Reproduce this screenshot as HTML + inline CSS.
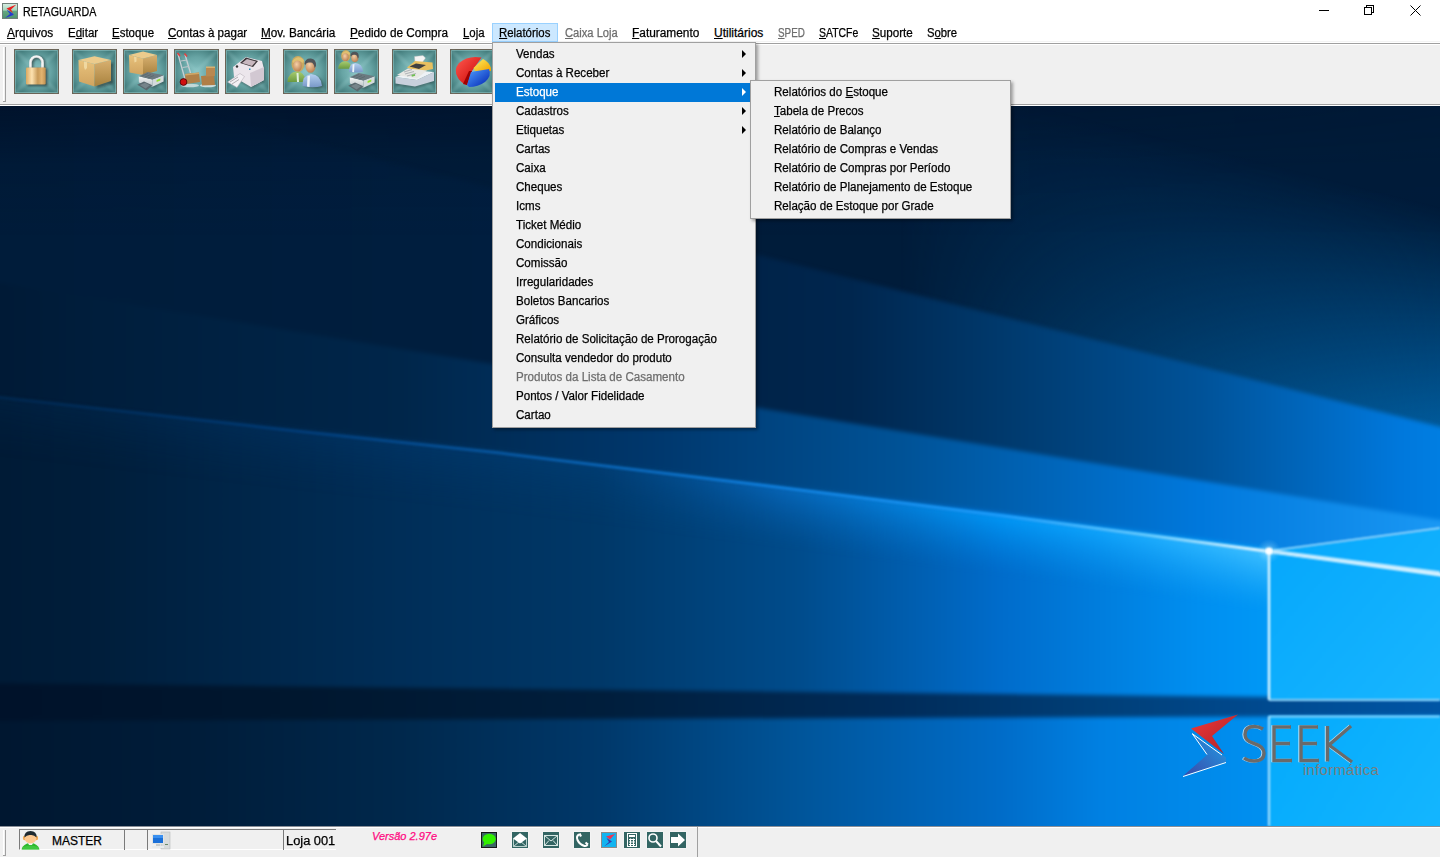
<!DOCTYPE html>
<html><head><meta charset="utf-8">
<style>
*{box-sizing:border-box}
html,body{margin:0;padding:0}
body{width:1440px;height:857px;overflow:hidden;position:relative;background:#f0f0f0;font-family:"Liberation Sans",sans-serif;font-size:12px;color:#000}
.a{position:absolute}
.t{position:absolute;white-space:nowrap;transform-origin:0 0;line-height:14px;-webkit-text-stroke:.25px currentColor}
u{text-decoration:underline;text-decoration-thickness:1px;text-underline-offset:1px}
#desk{left:0;top:106px;width:1440px;height:720px;overflow:hidden;background:#012a5a}
.btn{position:absolute;top:49px;width:45px;height:45px;border:1px solid #5a564c;box-shadow:-1px -1px 0 #fff, 1px 1px 0 #fff;
 background:
  linear-gradient(45deg, rgba(255,255,255,0) 40%, rgba(160,215,215,.35) 50%, rgba(255,255,255,0) 60%),
  linear-gradient(-45deg, rgba(255,255,255,0) 40%, rgba(160,215,215,.35) 50%, rgba(255,255,255,0) 60%),
  radial-gradient(circle at 50% 50%, #7ab4b4 0%, #5e9c9c 45%, #3f7777 100%);}
.btn svg{position:absolute;left:0;top:0}
.mi{position:absolute;left:0;height:19px;width:100%}
.mi .t{left:23px;top:2px;transform:scaleX(.965)}
.arr{position:absolute;width:0;height:0;border-top:4px solid transparent;border-bottom:4px solid transparent;border-left:4px solid #000}
.sico{position:absolute;top:832px;width:16px;height:16px;background:#3b6b67}
</style></head>
<body>
<!-- title bar -->
<div class="a" style="left:0;top:0;width:1440px;height:43px;background:#fff"></div>
<div class="a" style="left:0;top:41px;width:1440px;height:1px;background:#f3f3f3"></div>
<div class="a" style="left:0;top:43px;width:1440px;height:1px;background:#a0a0a0"></div>
<div class="a" style="left:0;top:44px;width:1440px;height:1px;background:#fff"></div>
<div class="a" style="left:0;top:104px;width:1440px;height:1px;background:#a0a0a0"></div>
<div class="a" style="left:0;top:105px;width:1440px;height:1px;background:#fff"></div>

<!-- app icon -->
<svg class="a" style="left:2px;top:3px" width="16" height="16" viewBox="0 0 16 16">
 <defs><linearGradient id="ig" x1="0" y1="0" x2="0" y2="1"><stop offset="0" stop-color="#d8efe4"/><stop offset=".45" stop-color="#a8d4bc"/><stop offset=".5" stop-color="#64a882"/><stop offset="1" stop-color="#4e9270"/></linearGradient></defs>
 <rect x="0.5" y="0.5" width="15" height="15" fill="url(#ig)" stroke="#70807a"/>
 <path d="M4.5 5.5 L14.5 1.5 L9 6.5 L11 10 Z" fill="#e82020"/>
 <path d="M4.5 6.5 L11.5 11 L11.5 12 L3 15 L8 11 Z" fill="#2838d0"/>
</svg>
<div class="t" style="left:23px;top:5px;transform:scaleX(.89)">RETAGUARDA</div>

<!-- window controls -->
<svg class="a" style="left:1300px;top:0" width="140" height="22" shape-rendering="crispEdges">
 <rect x="19" y="10" width="10" height="1" fill="#000"/>
 <path d="M66.5 7.5 V5.5 H73.5 V12.5 H71.5" fill="none" stroke="#000"/>
 <rect x="64.5" y="7.5" width="7" height="7" fill="#fff" stroke="#000"/>
</svg>
<svg class="a" style="left:1409px;top:4px" width="13" height="13">
 <path d="M1.5 1.5 L11.5 11.5 M11.5 1.5 L1.5 11.5" stroke="#000" stroke-width="1"/>
</svg>

<!-- menubar -->
<div class="a" style="left:492px;top:23px;width:66px;height:19px;background:#cce8ff;border:1px solid #99d1ff"></div>
<div id="menubar">
<div class="t" style="left:7px;top:26px;transform:scaleX(.99)"><u>A</u>rquivos</div>
<div class="t" style="left:68px;top:26px;transform:scaleX(.96)">E<u>d</u>itar</div>
<div class="t" style="left:112px;top:26px;transform:scaleX(.955)"><u>E</u>stoque</div>
<div class="t" style="left:168px;top:26px;transform:scaleX(.965)"><u>C</u>ontas à pagar</div>
<div class="t" style="left:261px;top:26px;transform:scaleX(.98)"><u>M</u>ov. Bancária</div>
<div class="t" style="left:350px;top:26px;transform:scaleX(.98)"><u>P</u>edido de Compra</div>
<div class="t" style="left:463px;top:26px;transform:scaleX(.95)"><u>L</u>oja</div>
<div class="t" style="left:499px;top:26px;transform:scaleX(.95)"><u>R</u>elatórios</div>
<div class="t" style="left:565px;top:26px;transform:scaleX(.93);color:#6d6d6d"><u>C</u>aixa Loja</div>
<div class="t" style="left:632px;top:26px;transform:scaleX(.99)"><u>F</u>aturamento</div>
<div class="t" style="left:714px;top:26px;transform:scaleX(1)"><u>U</u>tilitários</div>
<div class="t" style="left:778px;top:26px;transform:scaleX(.82);color:#6d6d6d"><u>S</u>PED</div>
<div class="t" style="left:819px;top:26px;transform:scaleX(.87)"><u>S</u>ATCFe</div>
<div class="t" style="left:872px;top:26px;transform:scaleX(.97)"><u>S</u>uporte</div>
<div class="t" style="left:927px;top:26px;transform:scaleX(.94)">S<u>o</u>bre</div>
</div>

<!-- toolbar grip -->
<div class="a" style="left:3px;top:47px;width:1px;height:55px;background:#fff"></div>
<div class="a" style="left:5px;top:47px;width:1px;height:55px;background:#a0a0a0"></div>
<div class="a" style="left:3px;top:101px;width:3px;height:1px;background:#a0a0a0"></div>

<div id="tb"><!--TB--><svg class="a" style="left:0;top:44px" width="492" height="60" viewBox="0 44 492 60"><defs>
<radialGradient id="bbg" cx="50%" cy="50%" r="60%"><stop offset="0" stop-color="#86c2c2"/><stop offset=".55" stop-color="#67a4a4"/><stop offset="1" stop-color="#3f7878"/></radialGradient>
<linearGradient id="bdg1" x1="0" y1="0" x2="1" y2="1"><stop offset="0" stop-color="#fff" stop-opacity="0"/><stop offset=".5" stop-color="#bfe6e6" stop-opacity=".28"/><stop offset="1" stop-color="#fff" stop-opacity="0"/></linearGradient>
<linearGradient id="gold" x1="0" y1="0" x2="1" y2="0"><stop offset="0" stop-color="#d9a860"/><stop offset=".3" stop-color="#fde2b0"/><stop offset=".6" stop-color="#c89a58"/><stop offset=".8" stop-color="#e2b470"/><stop offset="1" stop-color="#c09050"/></linearGradient>
<linearGradient id="boxL" x1="0" y1="0" x2="0" y2="1"><stop offset="0" stop-color="#e8c27c"/><stop offset="1" stop-color="#d0a460"/></linearGradient>
<linearGradient id="boxR" x1="0" y1="0" x2="0" y2="1"><stop offset="0" stop-color="#d8b070"/><stop offset="1" stop-color="#a8823e"/></linearGradient>
<linearGradient id="prn" x1="0" y1="0" x2="0" y2="1"><stop offset="0" stop-color="#f4f6f6"/><stop offset="1" stop-color="#b8c0c4"/></linearGradient>
<linearGradient id="pie1" x1="0" y1="0" x2="1" y2="1"><stop offset="0" stop-color="#ff5a50"/><stop offset="1" stop-color="#c80000"/></linearGradient>
<linearGradient id="pie2" x1="0" y1="0" x2="1" y2="1"><stop offset="0" stop-color="#50a0ff"/><stop offset="1" stop-color="#0020b0"/></linearGradient>
<linearGradient id="pie3" x1="0" y1="0" x2="1" y2="1"><stop offset="0" stop-color="#fff060"/><stop offset="1" stop-color="#f0a000"/></linearGradient>
<radialGradient id="skin" cx="40%" cy="35%" r="70%"><stop offset="0" stop-color="#f6d0a8"/><stop offset="1" stop-color="#b87c4c"/></radialGradient>
<linearGradient id="grn" x1="0" y1="0" x2="0" y2="1"><stop offset="0" stop-color="#a8cc70"/><stop offset="1" stop-color="#6a9a40"/></linearGradient>
<linearGradient id="blu" x1="0" y1="0" x2="0" y2="1"><stop offset="0" stop-color="#b4d0f0"/><stop offset="1" stop-color="#7898c8"/></linearGradient>
<filter id="sh" x="-30%" y="-30%" width="160%" height="160%"><feGaussianBlur stdDeviation=".8"/></filter>
</defs><g transform="translate(14,49)"><rect x="0.5" y="0.5" width="44" height="44" fill="url(#bbg)" stroke="#6a6356"/><path d="M2 2 L43 43 M43 2 L2 43" stroke="#a6d8d8" stroke-width="4" opacity=".22" filter="url(#sh)"/><rect x="1.5" y="1.5" width="42" height="42" fill="none" stroke="#94c6c6" stroke-opacity=".55"/><path d="M16.5 19 V13.5 a6 6 0 0 1 12 0 V19" fill="none" stroke="#111" stroke-width="3" opacity=".5" filter="url(#sh)" transform="translate(1.5,1)"/>
<path d="M16.5 19 V13.5 a6 6 0 0 1 12 0 V19" fill="none" stroke="#f4f4f4" stroke-width="2.6"/>
<path d="M17.5 19 V13.5 a5 5 0 0 1 10 0" fill="none" stroke="#a8a8a8" stroke-width=".6" opacity=".6"/>
<rect x="13.5" y="19.5" width="20" height="17.5" fill="#111" opacity=".55" filter="url(#sh)"/>
<rect x="12" y="18.5" width="19.7" height="17" rx="1" fill="url(#gold)"/></g><g transform="translate(72,49)"><rect x="0.5" y="0.5" width="44" height="44" fill="url(#bbg)" stroke="#6a6356"/><path d="M2 2 L43 43 M43 2 L2 43" stroke="#a6d8d8" stroke-width="4" opacity=".22" filter="url(#sh)"/><rect x="1.5" y="1.5" width="42" height="42" fill="none" stroke="#94c6c6" stroke-opacity=".55"/><path d="M23 38 L40 33 L40 12 L23 16 Z" fill="#111" opacity=".45" filter="url(#sh)" transform="translate(1.5,1.5)"/>
<path d="M6.5 11 L22.5 15 L22.5 37.5 L7 32.5 Z" fill="url(#boxL)"/>
<path d="M22.5 15 L39 11 L39 32 L22.5 37.5 Z" fill="url(#boxR)"/>
<path d="M6.5 11 L22.5 7.3 L39 11 L22.5 15 Z" fill="#eccb8c"/>
<path d="M12 12.5 L15 13.3 L15 19 L13 21 L12 18 Z" fill="#f0d8a0"/></g><g transform="translate(123,49)"><rect x="0.5" y="0.5" width="44" height="44" fill="url(#bbg)" stroke="#6a6356"/><path d="M2 2 L43 43 M43 2 L2 43" stroke="#a6d8d8" stroke-width="4" opacity=".22" filter="url(#sh)"/><rect x="1.5" y="1.5" width="42" height="42" fill="none" stroke="#94c6c6" stroke-opacity=".55"/><path d="M6 6 L20 9.5 L20 26 L6.5 23.5 Z" fill="url(#boxL)"/>
<path d="M20 9.5 L34 6 L34 22 L20 26 Z" fill="url(#boxR)"/>
<path d="M6 6 L20 2.5 L34 6 L20 9.5 Z" fill="#eccb8c"/>
<path d="M11 7.5 L13.5 8.2 L13.5 12.5 L11.5 13.5 Z" fill="#f0d8a0"/><g transform="translate(14,22)">
<path d="M2 11 L16 16 L27 10 L27 5 L11 1 L2 5 Z" fill="#000" opacity=".3" filter="url(#sh)" transform="translate(1,1.5)"/>
<path d="M1.8 5.3 L15.4 8.5 L15.4 15.8 L1.8 11.6 Z" fill="url(#prn)"/>
<path d="M15.4 8.5 L26.6 4.3 L26.6 10.5 L15.4 15.8 Z" fill="#d4dadc"/>
<path d="M1.8 5.3 L10.7 1.1 L26.6 4.3 L15.4 8.5 Z" fill="#6c7a80"/>
<path d="M5 5 L11 2.5 M8 6 L14 3.5 M11 7 L17 4.5" stroke="#56646a" stroke-width=".7"/>
<path d="M0.2 13.7 L7 10.6 L15.4 14.3 L9.6 19.5 Z" fill="#5a686e"/>
<path d="M3 14 L8 11.8 L13 14.2 L8.5 17.5 Z" fill="#76848a"/>
<path d="M19.6 9 L23.3 7.6 L23.3 9.6 L19.6 11 Z" fill="#90e030"/>
</g></g><g transform="translate(174,49)"><rect x="0.5" y="0.5" width="44" height="44" fill="url(#bbg)" stroke="#6a6356"/><path d="M2 2 L43 43 M43 2 L2 43" stroke="#a6d8d8" stroke-width="4" opacity=".22" filter="url(#sh)"/><rect x="1.5" y="1.5" width="42" height="42" fill="none" stroke="#94c6c6" stroke-opacity=".55"/><path d="M4 5 L11.5 32" stroke="#c8d0d4" stroke-width="1.3"/>
<path d="M11 5.5 L16.5 24" stroke="#c8d0d4" stroke-width="1.3"/>
<path d="M7 12 L13 11 M8.5 18.5 L15 17.5" stroke="#c0c8cc" stroke-width="1"/>
<path d="M3.5 4 L6 7 M10.5 4.5 L13 7.5" stroke="#e04040" stroke-width="1.6"/>
<ellipse cx="16" cy="36.5" rx="9" ry="1.8" fill="#e8f0f0" opacity=".7"/>
<ellipse cx="34" cy="36.5" rx="8" ry="1.8" fill="#e8f0f0" opacity=".8"/>
<path d="M11 25 L25 23.5 L26 33 L12 35 Z" fill="#b08048"/>
<path d="M11 25 L25 23.5 L25 25 L11.5 26.5 Z" fill="#d0a868"/>
<path d="M27 27 L40 26 L41 36 L28 36.5 Z" fill="#b07e46"/>
<path d="M32 18 L41 18 L41 27 L32 27.5 Z" fill="#b88850"/>
<path d="M32 17.5 L41 17.5 L41 19 L32 19 Z" fill="#d8b070"/>
<circle cx="9.5" cy="33" r="3.4" fill="#d01010" stroke="#400" stroke-width=".8"/></g><g transform="translate(225,49)"><rect x="0.5" y="0.5" width="44" height="44" fill="url(#bbg)" stroke="#6a6356"/><path d="M2 2 L43 43 M43 2 L2 43" stroke="#a6d8d8" stroke-width="4" opacity=".22" filter="url(#sh)"/><rect x="1.5" y="1.5" width="42" height="42" fill="none" stroke="#94c6c6" stroke-opacity=".55"/><path d="M8 18 L21 8 L37 12 L39 20 L39 31 L26 38 L10 29 Z" fill="#111" opacity=".35" filter="url(#sh)" transform="translate(1,1.5)"/>
<path d="M8 18 L21 8 L37 12 L39 20 L39 31 L26 38 L9 28 Z" fill="#ece6ec"/>
<path d="M25 24 L39 18 L39 31 L26 38 Z" fill="#d2c8d2"/>
<path d="M15 14 L21 8.5 L33 12 L28 18 Z" fill="#3a3438"/>
<path d="M17 14 L22 10 L31 12.5 L27 17 Z" fill="#c8b8c0"/>
<circle cx="12" cy="17.5" r="1.2" fill="#333"/>
<rect x="24" y="19.5" width="1.5" height="1.5" fill="#2a8ab0"/>
<path d="M2.5 33 L15 24.5 L19.5 27.5 L12 38.5 Z" fill="#f4f0f4" stroke="#b0a8b0" stroke-width=".5"/>
<path d="M5 33 L13 28 M7 35 L14 30.5" stroke="#a09aa0" stroke-width=".8"/></g><g transform="translate(283,49)"><rect x="0.5" y="0.5" width="44" height="44" fill="url(#bbg)" stroke="#6a6356"/><path d="M2 2 L43 43 M43 2 L2 43" stroke="#a6d8d8" stroke-width="4" opacity=".22" filter="url(#sh)"/><rect x="1.5" y="1.5" width="42" height="42" fill="none" stroke="#94c6c6" stroke-opacity=".55"/><ellipse cx="15" cy="15" rx="6.5" ry="8" fill="#c8a860"/>
<path d="M9.5 12 Q15 5 21 11 L20 14 Q15 10 10 14 Z" fill="#e0c070"/>
<ellipse cx="14.5" cy="17" rx="4.3" ry="5.5" fill="url(#skin)"/>
<path d="M4.5 33 Q5 23 14 22.5 Q22 23 23 33 Z" fill="url(#grn)"/>
<path d="M13.5 24 L15.5 24 L16 33 L14 33 Z" fill="#e0f0e0"/>
<path d="M20 36.5 Q20 26 28.5 25.5 Q38.5 26 39.5 37.5 Q30 40 20 36.5 Z" fill="#000" opacity=".35" filter="url(#sh)" transform="translate(1,1)"/>
<ellipse cx="27.5" cy="17.5" rx="5" ry="6.3" fill="url(#skin)"/>
<path d="M21.5 15 Q22 9 28 9.5 Q33.5 10 33 17 L31.5 19 Q31 13 27 13.5 Q23 13 22.5 16 Z" fill="#505458"/>
<path d="M19.5 37 Q19 26 28 25 Q38 25.5 39 37 Q30 39.5 19.5 37 Z" fill="url(#blu)"/>
<path d="M24.5 27 L27 26.5 L26.5 38 L24 37.5 Z" fill="#f0f4f8"/></g><g transform="translate(334,49)"><rect x="0.5" y="0.5" width="44" height="44" fill="url(#bbg)" stroke="#6a6356"/><path d="M2 2 L43 43 M43 2 L2 43" stroke="#a6d8d8" stroke-width="4" opacity=".22" filter="url(#sh)"/><rect x="1.5" y="1.5" width="42" height="42" fill="none" stroke="#94c6c6" stroke-opacity=".55"/><g transform="translate(1,-4) scale(.72)">
<ellipse cx="15" cy="15" rx="6.5" ry="8" fill="#c8a860"/>
<path d="M9.5 12 Q15 5 21 11 L20 14 Q15 10 10 14 Z" fill="#e0c070"/>
<ellipse cx="14.5" cy="17" rx="4.3" ry="5.5" fill="url(#skin)"/>
<path d="M4.5 33 Q5 23 14 22.5 Q22 23 23 33 Z" fill="url(#grn)"/>
<ellipse cx="27.5" cy="17.5" rx="5" ry="6.3" fill="url(#skin)"/>
<path d="M21.5 15 Q22 9 28 9.5 Q33.5 10 33 17 L31.5 19 Q31 13 27 13.5 Q23 13 22.5 16 Z" fill="#505458"/>
<path d="M19.5 37 Q19 26 28 25 Q38 25.5 39 37 Q30 39.5 19.5 37 Z" fill="url(#blu)"/>
<path d="M24.5 27 L27 26.5 L26.5 38 L24 37.5 Z" fill="#f0f4f8"/>
</g><g transform="translate(14,23)">
<path d="M2 11 L16 16 L27 10 L27 5 L11 1 L2 5 Z" fill="#000" opacity=".3" filter="url(#sh)" transform="translate(1,1.5)"/>
<path d="M1.8 5.3 L15.4 8.5 L15.4 15.8 L1.8 11.6 Z" fill="url(#prn)"/>
<path d="M15.4 8.5 L26.6 4.3 L26.6 10.5 L15.4 15.8 Z" fill="#d4dadc"/>
<path d="M1.8 5.3 L10.7 1.1 L26.6 4.3 L15.4 8.5 Z" fill="#6c7a80"/>
<path d="M5 5 L11 2.5 M8 6 L14 3.5 M11 7 L17 4.5" stroke="#56646a" stroke-width=".7"/>
<path d="M0.2 13.7 L7 10.6 L15.4 14.3 L9.6 19.5 Z" fill="#5a686e"/>
<path d="M3 14 L8 11.8 L13 14.2 L8.5 17.5 Z" fill="#76848a"/>
<path d="M19.6 9 L23.3 7.6 L23.3 9.6 L19.6 11 Z" fill="#90e030"/>
</g></g><g transform="translate(392,49)"><rect x="0.5" y="0.5" width="44" height="44" fill="url(#bbg)" stroke="#6a6356"/><path d="M2 2 L43 43 M43 2 L2 43" stroke="#a6d8d8" stroke-width="4" opacity=".22" filter="url(#sh)"/><rect x="1.5" y="1.5" width="42" height="42" fill="none" stroke="#94c6c6" stroke-opacity=".55"/><path d="M3 29 L27 25 L42 22 L42 32 L23 38 L3 35 Z" fill="#000" opacity=".3" filter="url(#sh)" transform="translate(.5,1.5)"/>
<path d="M22.5 7.5 L31 6.5 L33.5 9 L30 14 L23 14 Z" fill="#f4f4f4" stroke="#b8b8b8" stroke-width=".4"/>
<path d="M15 18.5 L23 12 L40.5 13.5 L41 20 L26 23 Z" fill="#e8c060"/>
<path d="M17.5 17.5 L24 14.5 L34 16 L27 20 Z" fill="#404040"/>
<path d="M3.5 28 L25 31 L42 23 L42 32 L23 37.5 L3.5 34.5 Z" fill="#c8d0dc"/>
<path d="M3.5 28 L25 31 L42 23 L22 21.5 Z" fill="#eef2f6"/>
<path d="M5 26 L16 19.5 L35 21.5 L25 29.5 Z" fill="#e8e8e4"/>
<path d="M12 23 L20 20.5 M13 25 L22 22.5 M15 27 L24 24.5" stroke="#b0b4b8" stroke-width="1.1"/>
<rect x="19.5" y="25.5" width="3.5" height="1.8" fill="#70c050" transform="rotate(-15 21 26)"/></g><g transform="translate(450,49)"><rect x="0.5" y="0.5" width="44" height="44" fill="url(#bbg)" stroke="#6a6356"/><path d="M2 2 L43 43 M43 2 L2 43" stroke="#a6d8d8" stroke-width="4" opacity=".22" filter="url(#sh)"/><rect x="1.5" y="1.5" width="42" height="42" fill="none" stroke="#94c6c6" stroke-opacity=".55"/><path d="M22 22 L31.5 8.5 Q18 6 9 14 Q3 21 8 29 Q11 34 17 36 Z" fill="url(#pie1)"/>
<path d="M22 22 L17 36 L13 35 L19 22 Z" fill="#a00000"/>
<path d="M23.5 19 L33 10 Q39 13 41 19 L41 22 L25 22 Z" fill="url(#pie3)"/>
<path d="M21 23 L39 20 Q42 27 35 33 Q28 38 19 38 L17 36 Z" fill="url(#pie2)"/></g></svg><!--/TB--></div>

<!-- desktop -->
<div id="desk" class="a"><!--BG--><svg class="a" style="left:0;top:0" width="1440" height="720" viewBox="0 106 1440 720"><defs><filter id="bl2" x="-5%" y="-5%" width="110%" height="110%" color-interpolation-filters="sRGB"><feGaussianBlur stdDeviation="2"/></filter><filter id="bl20" x="-20%" y="-50%" width="140%" height="200%" color-interpolation-filters="sRGB"><feGaussianBlur stdDeviation="20"/></filter><filter id="bl1" x="-5%" y="-50%" width="110%" height="200%" color-interpolation-filters="sRGB"><feGaussianBlur stdDeviation="1"/></filter><linearGradient id="gAg" gradientUnits="userSpaceOnUse" x1="0" y1="-156" x2="0" y2="64" gradientTransform="skewY(14.144)"><stop offset="0.0000" stop-color="#005a9a" stop-opacity="0"/><stop offset="1.0000" stop-color="#005a9a" stop-opacity="1"/></linearGradient><radialGradient id="corner"><stop offset="0" stop-color="#fff" stop-opacity=".8"/><stop offset=".3" stop-color="#c0ecff" stop-opacity=".35"/><stop offset="1" stop-color="#80d0ff" stop-opacity="0"/></radialGradient><linearGradient id="gTop" x1="0" y1="0" x2="0" y2="1"><stop offset="0" stop-color="#000a1e" stop-opacity=".5"/><stop offset=".45" stop-color="#000a1e" stop-opacity=".1"/><stop offset="1" stop-color="#000a1e" stop-opacity="0"/></linearGradient><linearGradient id="mTopx" gradientUnits="userSpaceOnUse" x1="0" y1="0" x2="1440" y2="0"><stop offset="0.0000" stop-color="#fff" stop-opacity="1"/><stop offset="0.4861" stop-color="#fff" stop-opacity="0.7"/><stop offset="1.0000" stop-color="#fff" stop-opacity="0.25"/></linearGradient><mask id="mTop" maskUnits="userSpaceOnUse" x="0" y="106" width="1440" height="130"><rect x="0" y="106" width="1440" height="130" fill="url(#mTopx)"/></mask><linearGradient id="gAx" gradientUnits="userSpaceOnUse" x1="0" y1="0" x2="1440" y2="0"><stop offset="0.6250" stop-color="#005a9a" stop-opacity="0"/><stop offset="1.0000" stop-color="#005a9a" stop-opacity="1"/></linearGradient><linearGradient id="mAx" gradientUnits="userSpaceOnUse" x1="0" y1="0" x2="1440" y2="0"><stop offset="0.6250" stop-color="#fff" stop-opacity="0"/><stop offset="1.0000" stop-color="#fff" stop-opacity="1"/></linearGradient><mask id="mA" maskUnits="userSpaceOnUse" x="0" y="106" width="1440" height="720"><rect x="0" y="106" width="1440" height="720" fill="url(#mAx)"/></mask><linearGradient id="gAB" gradientUnits="userSpaceOnUse" x1="0" y1="0" x2="1440" y2="0"><stop offset="0.0000" stop-color="#001c3a" stop-opacity="1"/><stop offset="0.4167" stop-color="#001f40" stop-opacity="1"/><stop offset="0.5903" stop-color="#00264e" stop-opacity="1"/><stop offset="0.6944" stop-color="#00396c" stop-opacity="1"/><stop offset="0.8333" stop-color="#005298" stop-opacity="1"/><stop offset="0.9722" stop-color="#0078dc" stop-opacity="1"/><stop offset="1.0000" stop-color="#007ee2" stop-opacity="1"/></linearGradient><linearGradient id="gBC" gradientUnits="userSpaceOnUse" x1="0" y1="0" x2="1440" y2="0"><stop offset="0.0000" stop-color="#001a36" stop-opacity="1"/><stop offset="0.0694" stop-color="#001e3c" stop-opacity="1"/><stop offset="0.2778" stop-color="#00264a" stop-opacity="1"/><stop offset="0.4514" stop-color="#00376c" stop-opacity="1"/><stop offset="0.6250" stop-color="#005296" stop-opacity="1"/><stop offset="0.8333" stop-color="#0078dc" stop-opacity="1"/><stop offset="1.0000" stop-color="#1a98f4" stop-opacity="1"/></linearGradient><linearGradient id="gC" gradientUnits="userSpaceOnUse" x1="0" y1="0" x2="1440" y2="0"><stop offset="0.0000" stop-color="#001b36" stop-opacity="1"/><stop offset="0.0694" stop-color="#001e3b" stop-opacity="1"/><stop offset="0.2778" stop-color="#002e58" stop-opacity="1"/><stop offset="0.4167" stop-color="#003868" stop-opacity="1"/><stop offset="0.5556" stop-color="#004c8c" stop-opacity="1"/><stop offset="0.6944" stop-color="#006ccb" stop-opacity="1"/><stop offset="0.8333" stop-color="#008ff0" stop-opacity="1"/><stop offset="0.8806" stop-color="#0098f6" stop-opacity="1"/><stop offset="1.0000" stop-color="#0aa0fa" stop-opacity="1"/></linearGradient><linearGradient id="gD" gradientUnits="userSpaceOnUse" x1="0" y1="0" x2="1440" y2="0"><stop offset="0.0000" stop-color="#00122a" stop-opacity="1"/><stop offset="0.2083" stop-color="#00172f" stop-opacity="1"/><stop offset="0.4167" stop-color="#001e3c" stop-opacity="1"/><stop offset="0.6250" stop-color="#002c5a" stop-opacity="1"/><stop offset="0.7639" stop-color="#003f78" stop-opacity="1"/><stop offset="0.8806" stop-color="#004a90" stop-opacity="1"/><stop offset="1.0000" stop-color="#0056a6" stop-opacity="1"/></linearGradient><linearGradient id="gE" gradientUnits="userSpaceOnUse" x1="0" y1="0" x2="1440" y2="0"><stop offset="0.0000" stop-color="#001730" stop-opacity="1"/><stop offset="0.1389" stop-color="#001d3a" stop-opacity="1"/><stop offset="0.2778" stop-color="#00284c" stop-opacity="1"/><stop offset="0.4167" stop-color="#00386a" stop-opacity="1"/><stop offset="0.5556" stop-color="#00559a" stop-opacity="1"/><stop offset="0.6944" stop-color="#006cc8" stop-opacity="1"/><stop offset="0.7639" stop-color="#0080e2" stop-opacity="1"/><stop offset="0.8806" stop-color="#0090f0" stop-opacity="1"/><stop offset="1.0000" stop-color="#0098f4" stop-opacity="1"/></linearGradient><linearGradient id="gP" gradientUnits="userSpaceOnUse" x1="1269" y1="551" x2="1440" y2="700"><stop offset="0.0000" stop-color="#06a8fc" stop-opacity="1"/><stop offset="1.0000" stop-color="#18b6ff" stop-opacity="1"/></linearGradient><linearGradient id="gP2" gradientUnits="userSpaceOnUse" x1="1269" y1="716" x2="1440" y2="826"><stop offset="0.0000" stop-color="#04aafc" stop-opacity="1"/><stop offset="1.0000" stop-color="#14b6ff" stop-opacity="1"/></linearGradient><linearGradient id="lineC" gradientUnits="userSpaceOnUse" x1="0" y1="0" x2="1440" y2="0"><stop offset="0.0000" stop-color="#013060" stop-opacity="0.5"/><stop offset="0.2083" stop-color="#014080" stop-opacity="0.8"/><stop offset="0.5278" stop-color="#1080e0" stop-opacity="0.9"/><stop offset="0.6944" stop-color="#20a0ff" stop-opacity="0.9"/><stop offset="0.7986" stop-color="#70d0ff" stop-opacity="0.95"/><stop offset="0.8812" stop-color="#f0fbff" stop-opacity="1"/></linearGradient><linearGradient id="glowC" gradientUnits="userSpaceOnUse" x1="0" y1="0" x2="1440" y2="0"><stop offset="0.0000" stop-color="#01305e" stop-opacity="0.2"/><stop offset="0.2083" stop-color="#013a72" stop-opacity="0.3"/><stop offset="0.4167" stop-color="#034a8e" stop-opacity="0.25"/><stop offset="0.5417" stop-color="#0a78d8" stop-opacity="0.55"/><stop offset="0.6944" stop-color="#00a0ff" stop-opacity="0.8"/><stop offset="0.7639" stop-color="#10a8ff" stop-opacity="0.9"/><stop offset="0.8812" stop-color="#40c0ff" stop-opacity="1"/></linearGradient><linearGradient id="gmC" gradientUnits="userSpaceOnUse" x1="0" y1="397" x2="0" y2="437" gradientTransform="skewY(7.069)"><stop offset="0.0000" stop-color="#fff" stop-opacity="1"/><stop offset="0.2500" stop-color="#fff" stop-opacity="0.6"/><stop offset="1.0000" stop-color="#fff" stop-opacity="0"/></linearGradient><mask id="mC" maskUnits="userSpaceOnUse" x="0" y="106" width="1440" height="720"><rect x="0" y="106" width="1440" height="720" fill="url(#gmC)"/></mask></defs>
<rect x="0" y="106" width="1440" height="720" fill="#001c3a"/>
<polygon points="0,72.0 1440,434.9 1440,196.9 0,-166.0" fill="url(#gAg)" mask="url(#mA)"/>
<g filter="url(#bl2)">
<polygon points="-20,59.0 1460,431.9 1460,526.3 -20,282.7" fill="url(#gAB)"/>
<polygon points="-20,279.7 1460,523.3 1460,577.0 1269,551.0 1000,515.0 760,484.6 500,452.6 300,431.0 0,397.0 -20,394.5" fill="url(#gBC)"/>
<polygon points="-20,391.5 0,394.0 300,428.0 500,449.6 760,481.6 1000,512.0 1269,548.0 1460,574.0 1460,700 -20,684" fill="url(#gC)"/>
<polygon points="-20,712 1460,712 1460,840 -20,840" fill="url(#gE)"/>
<polygon points="-20,683 1460,699 1460,716 -20,721" fill="url(#gD)"/>
</g>
<rect x="0" y="106" width="1440" height="130" fill="url(#gTop)" mask="url(#mTop)"/>
<g filter="url(#bl2)"><polygon points="-20,394.5 0,397.0 300,431.0 500,452.6 760,484.6 1000,515.0 1269,551.0 1460,577.0 1460,581.0 1269,555.0 1000,519.0 760,488.6 500,456.6 300,435.0 0,401.0 -20,398.5" fill="url(#glowC)" opacity="1.000"/><polygon points="-20,398.5 0,401.0 300,435.0 500,456.6 760,488.6 1000,519.0 1269,555.0 1460,581.0 1460,585.0 1269,559.0 1000,523.0 760,492.6 500,460.6 300,439.0 0,405.0 -20,402.5" fill="url(#glowC)" opacity="0.902"/><polygon points="-20,402.5 0,405.0 300,439.0 500,460.6 760,492.6 1000,523.0 1269,559.0 1460,585.0 1460,589.0 1269,563.0 1000,527.0 760,496.6 500,464.6 300,443.0 0,409.0 -20,406.5" fill="url(#glowC)" opacity="0.807"/><polygon points="-20,406.5 0,409.0 300,443.0 500,464.6 760,496.6 1000,527.0 1269,563.0 1460,589.0 1460,593.0 1269,567.0 1000,531.0 760,500.6 500,468.6 300,447.0 0,413.0 -20,410.5" fill="url(#glowC)" opacity="0.716"/><polygon points="-20,410.5 0,413.0 300,447.0 500,468.6 760,500.6 1000,531.0 1269,567.0 1460,593.0 1460,597.0 1269,571.0 1000,535.0 760,504.6 500,472.6 300,451.0 0,417.0 -20,414.5" fill="url(#glowC)" opacity="0.628"/><polygon points="-20,414.5 0,417.0 300,451.0 500,472.6 760,504.6 1000,535.0 1269,571.0 1460,597.0 1460,601.0 1269,575.0 1000,539.0 760,508.6 500,476.6 300,455.0 0,421.0 -20,418.5" fill="url(#glowC)" opacity="0.544"/><polygon points="-20,418.5 0,421.0 300,455.0 500,476.6 760,508.6 1000,539.0 1269,575.0 1460,601.0 1460,605.0 1269,579.0 1000,543.0 760,512.6 500,480.6 300,459.0 0,425.0 -20,422.5" fill="url(#glowC)" opacity="0.465"/><polygon points="-20,422.5 0,425.0 300,459.0 500,480.6 760,512.6 1000,543.0 1269,579.0 1460,605.0 1460,609.0 1269,583.0 1000,547.0 760,516.6 500,484.6 300,463.0 0,429.0 -20,426.5" fill="url(#glowC)" opacity="0.389"/><polygon points="-20,426.5 0,429.0 300,463.0 500,484.6 760,516.6 1000,547.0 1269,583.0 1460,609.0 1460,613.0 1269,587.0 1000,551.0 760,520.6 500,488.6 300,467.0 0,433.0 -20,430.5" fill="url(#glowC)" opacity="0.319"/><polygon points="-20,430.5 0,433.0 300,467.0 500,488.6 760,520.6 1000,551.0 1269,587.0 1460,613.0 1460,617.0 1269,591.0 1000,555.0 760,524.6 500,492.6 300,471.0 0,437.0 -20,434.5" fill="url(#glowC)" opacity="0.253"/><polygon points="-20,434.5 0,437.0 300,471.0 500,492.6 760,524.6 1000,555.0 1269,591.0 1460,617.0 1460,621.0 1269,595.0 1000,559.0 760,528.6 500,496.6 300,475.0 0,441.0 -20,438.5" fill="url(#glowC)" opacity="0.192"/><polygon points="-20,438.5 0,441.0 300,475.0 500,496.6 760,528.6 1000,559.0 1269,595.0 1460,621.0 1460,625.0 1269,599.0 1000,563.0 760,532.6 500,500.6 300,479.0 0,445.0 -20,442.5" fill="url(#glowC)" opacity="0.138"/><polygon points="-20,442.5 0,445.0 300,479.0 500,500.6 760,532.6 1000,563.0 1269,599.0 1460,625.0 1460,629.0 1269,603.0 1000,567.0 760,536.6 500,504.6 300,483.0 0,449.0 -20,446.5" fill="url(#glowC)" opacity="0.089"/><polygon points="-20,446.5 0,449.0 300,483.0 500,504.6 760,536.6 1000,567.0 1269,603.0 1460,629.0 1460,633.0 1269,607.0 1000,571.0 760,540.6 500,508.6 300,487.0 0,453.0 -20,450.5" fill="url(#glowC)" opacity="0.049"/><polygon points="-20,450.5 0,453.0 300,487.0 500,508.6 760,540.6 1000,571.0 1269,607.0 1460,633.0 1460,637.0 1269,611.0 1000,575.0 760,544.6 500,512.6 300,491.0 0,457.0 -20,454.5" fill="url(#glowC)" opacity="0.017"/></g>
<g filter="url(#bl1)">
<polygon points="1269,551 1460,526 1460,700 1269,700" fill="url(#gP)"/>
<polygon points="1269,716 1460,716 1460,840 1269,840" fill="url(#gP2)"/>
</g>
<g filter="url(#bl1)">
<polyline points="-20,395.0 0,397.5 300,431.5 500,453.1 760,485.1 1000,515.5 1269,551.5 1460,577.5" fill="none" stroke="url(#lineC)" stroke-width="3"/>
<line x1="1269" y1="551" x2="1440" y2="528" stroke="#b0e4ff" stroke-width="1.6"/>
<line x1="1269" y1="551" x2="1440" y2="573" stroke="#c8ecff" stroke-width="3.5"/>
<line x1="1269" y1="551" x2="1269" y2="700" stroke="#f4fcff" stroke-width="2.2"/>
<line x1="1269" y1="716" x2="1269" y2="826" stroke="#e0f6ff" stroke-width="1.6"/>
<line x1="1269" y1="700" x2="1440" y2="700" stroke="#c0eaff" stroke-width="1.3"/>
<line x1="1269" y1="716.5" x2="1440" y2="716.5" stroke="#b0e4ff" stroke-width="1.3"/>
</g>
<circle cx="1269" cy="551" r="12" fill="url(#corner)"/><circle cx="1269" cy="551" r="3.5" fill="#fff" filter="url(#bl1)"/>
</svg><!--/BG--></div>
<div class="a" style="left:0;top:826px;width:1440px;height:1px;background:#8a8f98"></div>
<div class="a" style="left:0;top:827px;width:1440px;height:1px;background:#fff"></div>

<!-- status bar -->
<div class="a" style="left:3px;top:830px;width:1px;height:26px;background:#fff"></div>
<div class="a" style="left:5px;top:830px;width:1px;height:26px;background:#a0a0a0"></div>
<div class="a" style="left:3px;top:855px;width:3px;height:1px;background:#a0a0a0"></div>

<div class="a" style="left:19px;top:829px;width:317px;height:21px;border-top:1px solid #7a7a7a;border-left:1px solid #7a7a7a;border-bottom:1px solid #fff"></div>
<div class="a" style="left:124px;top:829px;width:1px;height:21px;background:#7a7a7a"></div>
<div class="a" style="left:147px;top:829px;width:1px;height:21px;background:#7a7a7a"></div>
<div class="a" style="left:283px;top:829px;width:1px;height:21px;background:#7a7a7a"></div>
<div class="t" style="left:52px;top:834px">MASTER</div>
<div class="t" style="left:286px;top:834px;transform:scaleX(1.07)">Loja 001</div>
<div class="t" style="left:372px;top:829px;font-size:11px;font-style:italic;color:#ff0a82">Versão 2.97e</div>
<div class="a" style="left:697px;top:827px;width:1px;height:30px;background:#a0a0a0"></div>

<!--ST--><svg class="a" style="left:470px;top:826px" width="230" height="31" viewBox="470 826 230 31"><g transform="translate(481,832)"><rect x="-0.5" y="-0.5" width="17" height="17" fill="#fff" opacity=".5"/><rect x="0" y="0" width="16" height="16" fill="#3b6764"/><ellipse cx="8.2" cy="7" rx="6.6" ry="5.2" fill="#33f000"/><path d="M3.5 9.5 L2 14.5 L7 11.5 Z" fill="#33f000"/><rect x="0.5" y="0.5" width="15" height="15" fill="none" stroke="#161616"/></g><g transform="translate(512,832)"><rect x="-0.5" y="-0.5" width="17" height="17" fill="#fff" opacity=".5"/><rect x="0" y="0" width="16" height="16" fill="#336563"/><path d="M1.5 6.5 V14.5 H14.5 V6.5" fill="none" stroke="#b8d0cc" stroke-width="1"/><path d="M1.5 14.5 L8 9 L14.5 14.5" fill="none" stroke="#c8dcd8" stroke-width="1"/><path d="M1 6.5 L8 1 L15 6.5 L8 11.5 Z" fill="#fff"/></g><g transform="translate(543,832)"><rect x="-0.5" y="-0.5" width="17" height="17" fill="#fff" opacity=".5"/><rect x="0" y="0" width="16" height="16" fill="#336563"/><rect x="1.5" y="3.5" width="13" height="10" fill="none" stroke="#d8e8e4"/><path d="M1.5 3.5 L8 9 L14.5 3.5 M1.5 13.5 L6 8.5 M14.5 13.5 L10 8.5" fill="none" stroke="#d8e8e4"/></g><g transform="translate(574,832)"><rect x="-0.5" y="-0.5" width="17" height="17" fill="#fff" opacity=".5"/><rect x="0" y="0" width="16" height="16" fill="#336563"/><path d="M5 2.5 Q2 4 3.5 8 Q5.5 12.5 10.5 14 Q12.5 14.5 13.5 12.5" fill="none" stroke="#fff" stroke-width="2"/><path d="M5.5 1.5 L7 4.5 M11.5 10.5 L14 12.5" stroke="#fff" stroke-width="2.2"/></g><g transform="translate(601,832)"><rect x="-0.5" y="-0.5" width="17" height="17" fill="#fff" opacity=".5"/><rect x="0" y="0" width="16" height="16" fill="#12b4f0"/><path d="M14 2 L5 4.5 L9 7.5 Z" fill="#f03050"/><path d="M5.5 6 L11 9.5 L3 14.5 L8 10 Z" fill="#3838a8"/><rect x="0.5" y="0.5" width="15" height="15" fill="none" stroke="#8a8a8a"/></g><g transform="translate(624,832)"><rect x="-0.5" y="-0.5" width="17" height="17" fill="#fff" opacity=".5"/><rect x="0" y="0" width="16" height="16" fill="#336563"/><rect x="3.5" y="1.5" width="9" height="13" fill="none" stroke="#fff"/><rect x="5" y="3" width="6" height="2" fill="#fff"/><path d="M5 7.5 H11 M5 10 H11 M5 12.5 H11 M6.5 6.5 V14 M9.5 6.5 V14" stroke="#fff" stroke-width="1"/></g><g transform="translate(647,832)"><rect x="-0.5" y="-0.5" width="17" height="17" fill="#fff" opacity=".5"/><rect x="0" y="0" width="16" height="16" fill="#336563"/><circle cx="6" cy="6" r="4" fill="none" stroke="#fff" stroke-width="1.6"/><path d="M9 9 L14 14.5" stroke="#fff" stroke-width="2"/></g><g transform="translate(670,832)"><rect x="-0.5" y="-0.5" width="17" height="17" fill="#fff" opacity=".5"/><rect x="0" y="0" width="16" height="16" fill="#336563"/><path d="M1 5 H8 V1.5 L15 8 L8 14.5 V11 H1 Z" fill="#fff"/></g></svg><svg class="a" style="left:20px;top:830px" width="22" height="20" viewBox="0 0 22 20">
<path d="M1.5 19.5 Q3 13.5 10.5 13 Q18 13.5 19.5 19.5 Z" fill="#2db82d"/><path d="M3 17 Q10.5 14 18 17 L19 19.5 L2 19.5 Z" fill="#4ad04a" opacity=".6"/>
<path d="M8 13 L13 13 L12 15 L9 15 Z" fill="#f4f4f4"/>
<ellipse cx="4.5" cy="8" rx="1.6" ry="2.2" fill="#f0a850"/><ellipse cx="16.5" cy="8" rx="1.6" ry="2.2" fill="#f0a850"/>
<ellipse cx="10.5" cy="8.5" rx="5.8" ry="5" fill="#fcc890"/>
<path d="M4.5 7.5 Q4 1 10.5 1 Q17 1 16.5 7.5 Q14 4.5 10.5 5 Q7 4.5 4.5 7.5 Z" fill="#1e2a30"/>
</svg><svg class="a" style="left:150px;top:831px" width="22" height="19" viewBox="0 0 22 19">
<rect x="11" y="1" width="9" height="17" fill="#d8dcdc" stroke="#b8bcbc" stroke-width=".6"/>
<rect x="2" y="3" width="12" height="10" fill="#e0e4e4"/><rect x="3" y="4" width="10" height="8" fill="#1a70d8"/><rect x="3" y="4" width="10" height="3" fill="#3a90f0"/>
<rect x="6" y="13" width="4" height="2" fill="#c8cccc"/><rect x="2" y="15" width="12" height="2" fill="#e8ecec"/>
<rect x="15" y="13" width="3" height="1" fill="#6a8a6a"/>
</svg><svg class="a" style="left:1170px;top:705px" width="230" height="80" viewBox="1170 705 230 80">
<defs><linearGradient id="skr" x1="0" y1="0" x2="1" y2="1"><stop offset="0" stop-color="#f03838"/><stop offset="1" stop-color="#a82028"/></linearGradient>
<linearGradient id="skb" x1="1" y1="0" x2="0" y2="1"><stop offset="0" stop-color="#20a0e8"/><stop offset="1" stop-color="#3a48a8"/></linearGradient></defs>
<path d="M1191 728.5 L1238 714.5 L1212 736 L1224 754 Z" fill="url(#skr)"/>
<path d="M1192.5 733.5 L1226 757.5 L1226 762 L1183 776 L1207.5 754.5 Z" fill="url(#skb)"/>
<path d="M1192 733.5 L1222 755 M1192.5 734 L1207 754.5 M1183 776.5 L1226 762.5" stroke="#fff" stroke-width="1" fill="none"/>
<g fill="none" stroke="#f4f8fc" stroke-width="3.4" transform="translate(-1,0)" opacity=".7">
<path d="M1263 729 Q1259 726.5 1254 726.5 Q1245 726.5 1245 734.5 Q1245 741 1254 743.5 Q1264 746.5 1264 753 Q1264 761 1254 761 Q1248 761 1244 758"/>
<path d="M1291 727 H1274 V760.5 H1292 M1274 743.5 H1290"/>
<path d="M1318 727 H1301 V760.5 H1319 M1301 743.5 H1317"/>
<path d="M1327.5 726 V761.5 M1351 726 L1329 745 L1352 762"/>
</g>
<g fill="none" stroke="#6a6a6a" stroke-width="3.4">
<path d="M1263 729 Q1259 726.5 1254 726.5 Q1245 726.5 1245 734.5 Q1245 741 1254 743.5 Q1264 746.5 1264 753 Q1264 761 1254 761 Q1248 761 1244 758"/>
<path d="M1291 727 H1274 V760.5 H1292 M1274 743.5 H1290"/>
<path d="M1318 727 H1301 V760.5 H1319 M1301 743.5 H1317"/>
<path d="M1327.5 726 V761.5 M1351 726 L1329 745 L1352 762"/>
</g>
<text x="1303" y="775" font-family="Liberation Sans" font-size="14.5" fill="#7c7c7c" letter-spacing=".3" textLength="76" lengthAdjust="spacingAndGlyphs">informática</text>
</svg><!--/ST-->

<!-- main dropdown -->
<div class="a" style="left:492px;top:42px;width:264px;height:386px;background:#f0f0f0;border:1px solid #a0a0a0;box-shadow:2px 2px 3px rgba(0,0,0,.35)">
</div>
<div class="a" style="left:495px;top:83px;width:258px;height:19px;background:#0078d7"></div>
<div id="m1" class="a" style="left:493px;top:45px;width:262px;height:380px">
<div class="mi" style="top:0"><div class="t">Vendas</div><div class="arr" style="left:249px;top:5px"></div></div>
<div class="mi" style="top:19px"><div class="t">Contas à Receber</div><div class="arr" style="left:249px;top:5px"></div></div>
<div class="mi" style="top:38px;color:#fff"><div class="t">Estoque</div><div class="arr" style="left:249px;top:5px;border-left-color:#fff"></div></div>
<div class="mi" style="top:57px"><div class="t">Cadastros</div><div class="arr" style="left:249px;top:5px"></div></div>
<div class="mi" style="top:76px"><div class="t">Etiquetas</div><div class="arr" style="left:249px;top:5px"></div></div>
<div class="mi" style="top:95px"><div class="t">Cartas</div></div>
<div class="mi" style="top:114px"><div class="t">Caixa</div></div>
<div class="mi" style="top:133px"><div class="t">Cheques</div></div>
<div class="mi" style="top:152px"><div class="t">Icms</div></div>
<div class="mi" style="top:171px"><div class="t">Ticket Médio</div></div>
<div class="mi" style="top:190px"><div class="t">Condicionais</div></div>
<div class="mi" style="top:209px"><div class="t">Comissão</div></div>
<div class="mi" style="top:228px"><div class="t">Irregularidades</div></div>
<div class="mi" style="top:247px"><div class="t">Boletos Bancarios</div></div>
<div class="mi" style="top:266px"><div class="t">Gráficos</div></div>
<div class="mi" style="top:285px"><div class="t">Relatório de Solicitação de Prorogação</div></div>
<div class="mi" style="top:304px"><div class="t">Consulta vendedor do produto</div></div>
<div class="mi" style="top:323px;color:#6d6d6d"><div class="t">Produtos da Lista de Casamento</div></div>
<div class="mi" style="top:342px"><div class="t">Pontos / Valor Fidelidade</div></div>
<div class="mi" style="top:361px"><div class="t">Cartao</div></div>
</div>

<!-- submenu -->
<div class="a" style="left:750px;top:80px;width:261px;height:139px;background:#f0f0f0;border:1px solid #a0a0a0;box-shadow:2px 2px 3px rgba(0,0,0,.35)"></div>
<div id="m2" class="a" style="left:751px;top:83px;width:259px;height:133px">
<div class="mi" style="top:0"><div class="t">Relatórios do <u>E</u>stoque</div></div>
<div class="mi" style="top:19px"><div class="t"><u>T</u>abela de Precos</div></div>
<div class="mi" style="top:38px"><div class="t">Relatório de Balanço</div></div>
<div class="mi" style="top:57px"><div class="t">Relatório de Compras e Vendas</div></div>
<div class="mi" style="top:76px"><div class="t">Relatório de Compras por Período</div></div>
<div class="mi" style="top:95px"><div class="t">Relatório de Planejamento de Estoque</div></div>
<div class="mi" style="top:114px"><div class="t">Relação de Estoque por Grade</div></div>
</div>
</body></html>
